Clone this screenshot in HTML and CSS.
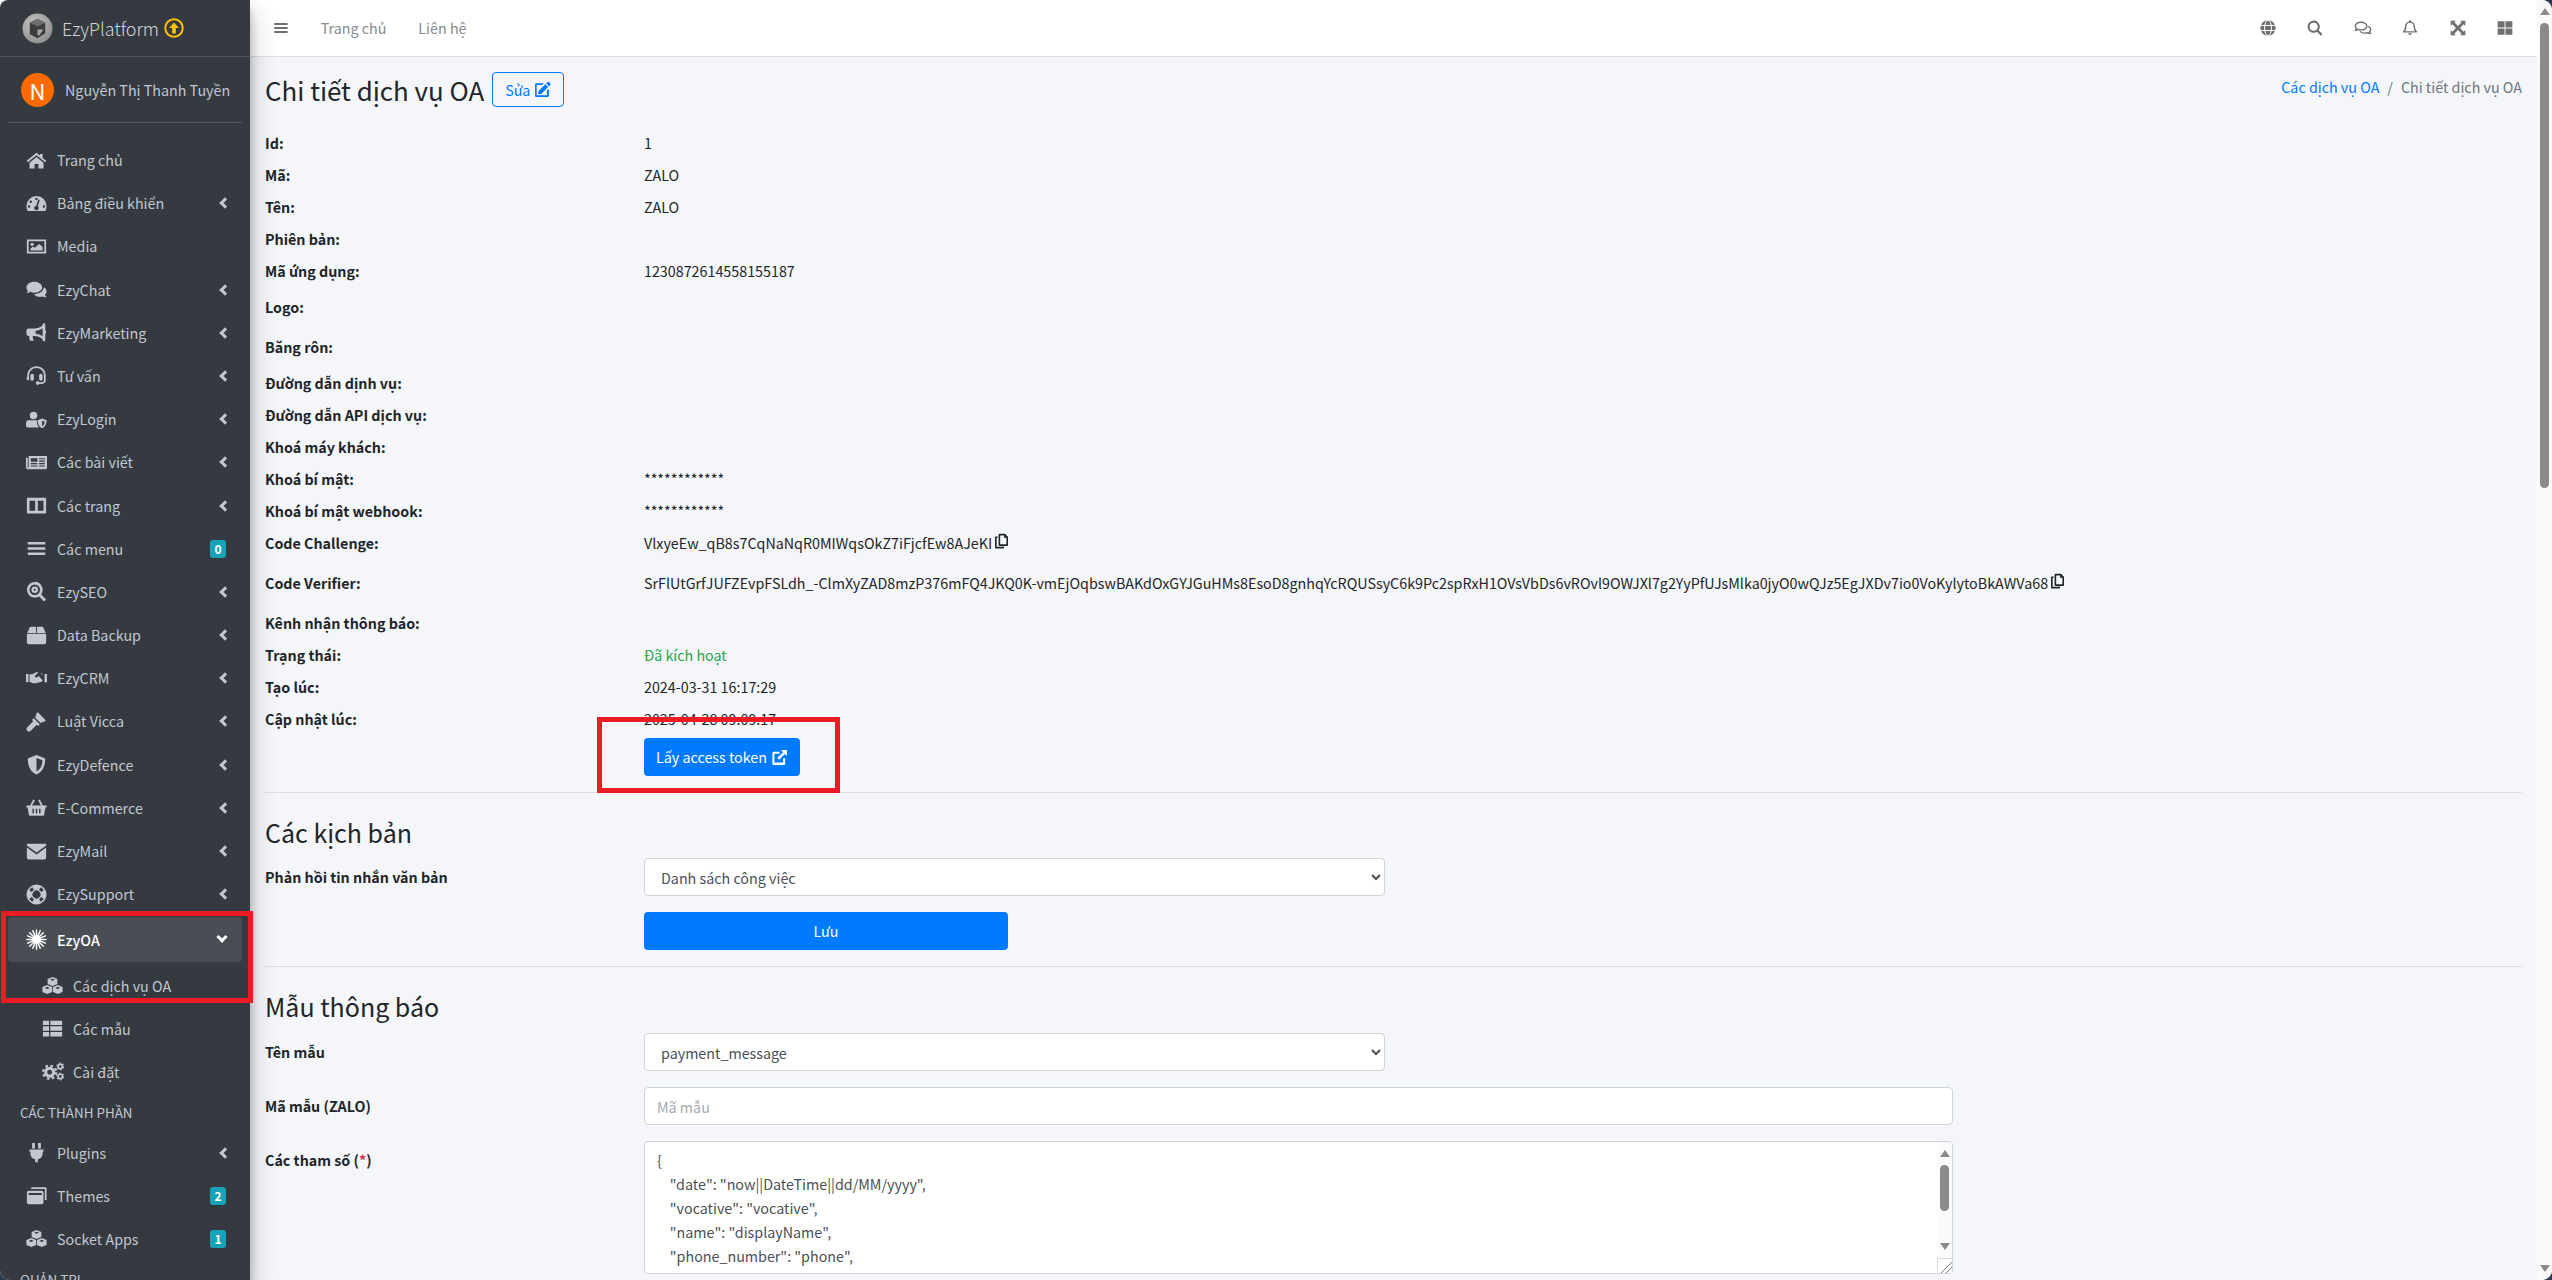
FILE: index.html
```html
<!DOCTYPE html>
<html lang="vi">
<head>
<meta charset="utf-8">
<title>Chi tiết dịch vụ OA</title>
<link rel="stylesheet" href="styles.css">
</head>
<body>
<svg class="sprite" width="0" height="0" aria-hidden="true">
  <symbol id="i-home" viewBox="0 0 24 24"><path d="M12 3.2 .8 12.4l1.3 1.6L12 5.9l9.900 8.100 1.300-1.600-4.200-3.400V4.500h-3v1.900zM4 14.600V21h5.800v-5h4.400v5H20v-6.400l-8-6.500z"/></symbol>
  <symbol id="i-gauge" viewBox="0 0 24 24"><path fill-rule="evenodd" d="M12 3.500A11.500 11.500 0 0 0 .5 15c0 2 .5 3.800 1.400 5.500h20.200c.9-1.700 1.400-3.500 1.400-5.500A11.500 11.500 0 0 0 12 3.500zM12 5.500a1.400 1.400 0 1 1 0 2.800 1.400 1.400 0 0 1 0-2.800zM5.500 8.500a1.400 1.400 0 1 1 0 2.800 1.400 1.400 0 0 1 0-2.800zM3.500 14a1.400 1.400 0 1 1 0 2.800 1.400 1.400 0 0 1 0-2.800zM20.500 14a1.400 1.400 0 1 1 0 2.800 1.400 1.400 0 0 1 0-2.800zM15.800 8 13.500 15a2.600 2.600 0 1 1-1.700-.5L14 7.500z"/></symbol>
  <symbol id="i-image" viewBox="0 0 24 24"><path fill-rule="evenodd" d="M1 4h22v16H1zM3 6v12h18V6z"/><circle cx="7" cy="9.500" r="1.800"/><path d="M5 16.500v-2l3-2.500 2 1.500 5-4.500 4 3.500v4z"/></symbol>
  <symbol id="i-comments" viewBox="0 0 24 24"><path d="M9.500 3C4.500 3 .5 6 .5 9.800c0 1.500.7 2.900 1.800 4-.5 1.300-1.600 2.200-1.800 2.400 1.700 0 3.400-.7 4.500-1.500 1.300.6 2.900 1 4.500 1 5 0 9-3 9-5.900C18.500 6 14.500 3 9.500 3z"/><path d="M23.500 20.500c-1-.9-1.500-1.800-1.800-2.500 1.100-1 1.800-2.300 1.800-3.800 0-1.900-1.100-3.600-2.900-4.700-.6 4.300-5.100 7.500-10.500 7.500h-1c1.300 2 3.900 3.400 7 3.400 1 0 2-.2 3-.5 1 .7 2.700 1.100 4.400.6z"/></symbol>
  <symbol id="i-bullhorn" viewBox="0 0 24 24"><path d="M20.500 1.500c-.8 0-1.500.7-1.500 1.500v.8C16 6.200 13 7.500 9.500 7.500H3A2.500 2.500 0 0 0 .5 10v3.500A2.500 2.500 0 0 0 3 16h.9a8 8 0 0 0 .7 5.500h4.300c-1-1.500-1.400-3.600-1-5.500h1.600c3.500 0 6.500 1.300 9.500 3.700v.8c0 .8.700 1.500 1.500 1.500s1.500-.7 1.500-1.500v-6.700a3 3 0 0 0 0-4.600V3c0-.8-.7-1.500-1.500-1.500zM19 7v9.500c-2.400-1.700-5-2.700-8-3V10c3-.3 5.600-1.300 8-3z"/></symbol>
  <symbol id="i-headset" viewBox="0 0 24 24"><path d="M12 1.500C6 1.500 1.500 6.200 1.500 12v1.500c-.6.400-1 1-1 1.700 0 1 .6 1.800 1.500 2.100h1.500V12c0-4.700 3.800-8.500 8.500-8.500s8.500 3.800 8.500 8.500v5.500c0 1.200-1 2.100-2.100 2.100h-3.400a2 2 0 1 0 0 2h3.400c2.300 0 4.100-1.800 4.100-4.100V12c0-5.800-4.500-10.500-10.500-10.500z"/><rect x="5" y="10" width="4" height="8" rx="2"/><rect x="15" y="10" width="4" height="8" rx="2"/></symbol>
  <symbol id="i-usershield" viewBox="0 0 28 24"><circle cx="10" cy="6.500" r="5"/><path d="M3 13h11.500c-.3 3 .4 6.500 3 9.500H2.500A2.500 2.500 0 0 1 0 20v-2c0-2.800 1-5 3-5z"/><path fill-rule="evenodd" d="M21.500 10.500l6 2.500c0 4-1.500 8.500-6 10.500-4.500-2-6-6.500-6-10.500zM21.500 13.500v7.500c2-1 3.200-3.400 3.400-6z"/></symbol>
  <symbol id="i-newspaper" viewBox="0 0 24 24"><path fill-rule="evenodd" d="M3 4.500h21V18a1.800 1.800 0 0 1-1.800 1.800H2a2 2 0 0 1-2-2V6.500h2v10.800c0 .4.200.6.500.6s.5-.2.500-.6zM5.500 7v4H13V7zM15 7v1.300h6.500V7zM15 9.800v1.300h6.500V9.800zM5.500 12.600v1.300H13v-1.300zM15 12.600v1.300h6.500v-1.300zM5.500 15.400v1.300H13v-1.300zM15 15.400v1.300h6.500v-1.300z"/></symbol>
  <symbol id="i-columns" viewBox="0 0 24 24"><path fill-rule="evenodd" d="M2 3h20a1 1 0 0 1 1 1v16a1 1 0 0 1-1 1H2a1 1 0 0 1-1-1V4a1 1 0 0 1 1-1zM4 6.500V18h6.500V6.500zM13.500 6.500V18H20V6.500z"/></symbol>
  <symbol id="i-bars" viewBox="0 0 24 24"><path d="M2 4.500h20v3H2zM2 10.500h20v3H2zM2 16.500h20v3H2z"/></symbol>
  <symbol id="i-seo" viewBox="0 0 24 24"><path fill-rule="evenodd" d="M10 1a9 9 0 0 1 7.300 14.300l5.700 5.700-2.300 2.300-5.700-5.700A9 9 0 1 1 10 1zM10 4a6 6 0 1 0 0 12 6 6 0 0 0 0-12zM10 6.200a3.800 3.800 0 1 1 0 7.600 3.800 3.800 0 0 1 0-7.600zM10 8.800a1.200 1.200 0 1 0 0 2.400 1.200 1.200 0 0 0 0-2.400z"/></symbol>
  <symbol id="i-box" viewBox="0 0 24 24"><path d="M5 2h6.500v7H1.500L4 3zM12.500 2H19l1 1 2.500 6h-10zM1 10h22v10a2 2 0 0 1-2 2H3a2 2 0 0 1-2-2z"/></symbol>
  <symbol id="i-handshake" viewBox="0 0 30 24"><path d="M0 5.500h3.500v12H0zM26.500 5.500H30v12h-3.500z"/><path d="M5 6h4l5-2.500c1-.4 2.500-.4 3.500 0L13 8c-1 1 0 3 2 2.500l3-2 6 6V7l-4.500-3H18c2 0 4 .5 6 2v9l-3 2.500-1.500-1-1 2-2-1-1.500 2-2-1.500-2 1L5 16.500z"/></symbol>
  <symbol id="i-gavel" viewBox="0 0 24 24"><path d="M13.500 1.500 22.500 10.500 20 13 19 12 17 14 10 7 12 5 11 4zM8.800 8.200l7 7-2 2-1.500-1.500L5.500 22.500a2 2 0 0 1-4-4l6.800-6.800-1.500-1.500z"/></symbol>
  <symbol id="i-shield" viewBox="0 0 24 24"><path fill-rule="evenodd" d="M12 1 22 5c0 8-2.500 15-10 18.500C4.500 20 2 13 2 5zM12 4.500V20c4.700-2.500 6.500-7 6.800-13z"/></symbol>
  <symbol id="i-basket" viewBox="0 0 26 24"><path fill-rule="evenodd" d="M11 3 7.500 9.500h11L15 3l2-1 4 7.500h4.500V12H24l-1.500 9a1.500 1.500 0 0 1-1.500 1.300H5A1.500 1.500 0 0 1 3.500 21L2 12H.5V9.500H5L9 2zM8 13.500V19h1.800v-5.500zM12.100 13.500V19h1.800v-5.500zM16.200 13.500V19H18v-5.500z"/></symbol>
  <symbol id="i-envelope" viewBox="0 0 24 24"><path d="M1 4.200C1 3.500 1.500 3 2.200 3h19.600c.7 0 1.200.5 1.200 1.200V5l-11 8L1 5zM1 7.500l11 8 11-8V19a2 2 0 0 1-2 2H3a2 2 0 0 1-2-2z"/></symbol>
  <symbol id="i-lifering" viewBox="0 0 24 24"><g transform="rotate(45 12 12)"><path fill-rule="evenodd" d="M12 .5a11.500 11.500 0 1 1 0 23 11.500 11.500 0 0 1 0-23zM12 7.500a4.500 4.500 0 1 0 0 9 4.500 4.500 0 0 0 0-9zM9.700 2.700l.6 3.500c1.100-.3 2.300-.3 3.400 0l.6-3.500a9.500 9.500 0 0 0-4.600 0zM2.700 9.700a9.500 9.500 0 0 0 0 4.600l3.500-.6c-.3-1.100-.3-2.300 0-3.400zM21.300 9.700l-3.500.6c.3 1.100.3 2.300 0 3.400l3.500.6a9.500 9.500 0 0 0 0-4.600zM10.300 17.800l-.6 3.500a9.500 9.500 0 0 0 4.600 0l-.6-3.500c-1.100.3-2.300.3-3.400 0z"/></g></symbol>
  <symbol id="i-burst" viewBox="0 0 24 24"><g stroke="currentColor" stroke-width="1.700" stroke-linecap="round"><path d="M12 1v22M1 12h22M4.200 4.200l15.600 15.600M19.800 4.200 4.200 19.800M7.800 1.900l8.400 20.200M16.200 1.900 7.800 22.100M1.900 7.800l20.200 8.400M22.100 7.800 1.900 16.200"/></g><circle cx="12" cy="12" r="2.200"/></symbol>
  <symbol id="i-cubes" viewBox="0 0 26 24"><path fill-rule="evenodd" d="M13 1.500 19 4v6l-6 2.500L7 10V4zM13 3.700 10 5l3 1.200L16 5zM6.500 11.500l6 2.500v6l-6 2.500-6-2.500v-6zM6.500 13.700l-3 1.300 3 1.200 3-1.200zM19.500 11.500l6 2.500v6l-6 2.500-6-2.500v-6zM19.500 13.700l-3 1.300 3 1.200 3-1.200z"/></symbol>
  <symbol id="i-table" viewBox="0 0 24 24"><path d="M1 3h7v5H1zM9.500 3H23v5H9.500zM1 9.500h7v5H1zM9.500 9.500H23v5H9.500zM1 16h7v5H1zM9.500 16H23v5H9.500z"/></symbol>
  <symbol id="i-cogs" viewBox="0 0 30 24"><g fill="none" stroke="currentColor"><circle cx="10" cy="13" r="5.200" stroke-width="4"/><circle cx="10" cy="13" r="8.500" stroke-width="3" stroke-dasharray="3.340 3.340"/><circle cx="23.800" cy="5.500" r="2.800" stroke-width="2"/><circle cx="23.800" cy="5.500" r="4.400" stroke-width="1.600" stroke-dasharray="2.300 2.300"/><circle cx="23.800" cy="18.500" r="2.800" stroke-width="2"/><circle cx="23.800" cy="18.500" r="4.400" stroke-width="1.600" stroke-dasharray="2.300 2.300"/></g></symbol>
  <symbol id="i-plug" viewBox="0 0 24 24"><path d="M7 1h3.200v6.500H7zM13.800 1H17v6.500h-3.200zM4 8.500h16V11h-1v2c0 3.500-2.400 6.200-5.500 6.800V23h-3v-3.200C7.400 19.200 5 16.500 5 13v-2H4z"/></symbol>
  <symbol id="i-clone" viewBox="0 0 24 24"><path fill-rule="evenodd" d="M3 6.500h15a2 2 0 0 1 2 2V20a2 2 0 0 1-2 2H3a2 2 0 0 1-2-2V8.500a2 2 0 0 1 2-2zM3 9v2.500h15V9z"/><path d="M6 2.500h16A1.500 1.500 0 0 1 23.500 4v13h-2V4.500H6z"/></symbol>
  <symbol id="i-globe" viewBox="0 0 24 24"><circle cx="12" cy="12" r="11.500"/><g fill="none" stroke="#fff" stroke-width="1.500"><ellipse cx="12" cy="12" rx="5.200" ry="11.500"/><path d="M.5 8.200h23M.5 15.800h23"/></g></symbol>
  <symbol id="i-search" viewBox="0 0 24 24"><path fill-rule="evenodd" d="M10 .8a9.200 9.200 0 0 1 7.400 14.600l5.800 5.800-2.400 2.400-5.800-5.800A9.200 9.200 0 1 1 10 .8zM10 4a6 6 0 1 0 0 12 6 6 0 0 0 0-12z"/></symbol>
  <symbol id="i-chat" viewBox="0 0 28 24"><g fill="none" stroke="currentColor" stroke-width="2.200" stroke-linejoin="round"><path d="M11 3C6 3 2 5.700 2 9.200c0 1.500.8 2.800 2 3.800-.4 1-1.200 2-2 2.500 1.800 0 3.500-.7 4.600-1.400 1.400.5 2.900.8 4.400.8 5 0 9-2.600 9-5.700S16 3 11 3z"/><path d="M22 9.500c2.400 1 4 2.800 4 4.800 0 1.500-.8 2.800-2 3.800.4 1 1.200 2 2 2.500-1.800 0-3.500-.7-4.600-1.400-1.400.5-2.900.8-4.400.8-3.200 0-6-1-7.500-2.800"/></g></symbol>
  <symbol id="i-bell" viewBox="0 0 24 24"><path fill="none" stroke="currentColor" stroke-width="2.200" stroke-linejoin="round" d="M12 3.200c-3.600 0-6.300 2.800-6.300 6.300 0 5-1.500 6.500-3.200 8.300h19c-1.700-1.800-3.200-3.300-3.200-8.300 0-3.500-2.700-6.300-6.300-6.300z"/><path d="M10.500.8h3v3h-3zM9.300 19.800h5.400a2.700 2.700 0 0 1-5.400 0z"/></symbol>
  <symbol id="i-expand" viewBox="0 0 24 24"><path d="M1 1h8L6.500 3.500 12 9l5.500-5.500L15 1h8v8l-2.500-2.500L15 12l5.500 5.500L23 15v8h-8l2.500-2.500L12 15l-5.500 5.500L9 23H1v-8l2.500 2.500L9 12 3.500 6.500 1 9z"/></symbol>
  <symbol id="i-thlarge" viewBox="0 0 24 24"><path d="M1 2h10.300v9.300H1zM12.700 2H23v9.300H12.700zM1 12.700h10.300V22H1zM12.700 12.700H23V22H12.700z"/></symbol>
  <symbol id="i-edit" viewBox="0 0 24 24"><path d="M3 3h11l-2.500 2.800H3.800v14.400h14.400v-6.700L21 11v10a1.500 1.500 0 0 1-1.500 1.500H3A1.500 1.500 0 0 1 1.500 21V4.500A1.500 1.500 0 0 1 3 3z"/><path d="M19 1.500a1.500 1.500 0 0 1 2 0l2 2a1.500 1.500 0 0 1 0 2l-1.700 1.800-4-4zM16 4.600l4 4-9.500 9.500-4.700.7.700-4.700z"/></symbol>
  <symbol id="i-external" viewBox="0 0 24 24"><path d="M4 4h8v2.800H4.800v12.400h12.400V13H20v8a1.500 1.500 0 0 1-1.500 1.500h-15A1.500 1.500 0 0 1 2 21V6a2 2 0 0 1 2-2z"/><path d="M14 1.500h8.500V10l-3-3-8 8-2.500-2.500 8-8z"/></symbol>
  <symbol id="i-copy" viewBox="0 0 20 24"><path fill-rule="evenodd" d="M7 1h8.500L20 5.500V18a1.500 1.500 0 0 1-1.500 1.500H7A1.500 1.500 0 0 1 5.500 18V2.500A1.500 1.500 0 0 1 7 1zM8 3.500V17h9.500V7H14V3.500z"/><path d="M1.500 5H4v2.500H2.500V21h9v-.5H14V22a1.500 1.500 0 0 1-1.500 1.500h-11A1.500 1.500 0 0 1 0 22V6.500A1.500 1.500 0 0 1 1.500 5z"/></symbol>
  <symbol id="i-upcircle" viewBox="0 0 24 24"><circle cx="12" cy="12" r="10.500" fill="none" stroke="currentColor" stroke-width="2.400"/><path d="M12 5.500 18 12h-3.800v6.500H9.800V12H6z"/></symbol>
</svg>

<div class="app">
  <aside class="sidebar">
    <div class="brand">
      <svg class="brand-logo" viewBox="0 0 32 32" aria-hidden="true">
        <defs><radialGradient id="logo-g" cx="40%" cy="35%" r="70%"><stop offset="0" stop-color="#c6c6c6"/><stop offset="1" stop-color="#8c8c8c"/></radialGradient></defs>
        <circle cx="16" cy="16" r="15.500" fill="url(#logo-g)"/>
        <path d="M8 10 16 6l8 4v11l-8 5-8-4z" fill="#3c3c3e"/>
        <path d="M16 6l8 4-8 4-8-4z" fill="#6e6e70"/>
        <path d="M16 17h6l-4 6h-2z" fill="#a8a8a8"/>
      </svg>
      <span class="brand-text">EzyPlatform</span>
      <svg class="icon brand-up"><use href="#i-upcircle"/></svg>
    </div>
    <div class="user-panel">
      <span class="avatar">N</span>
      <span class="user-name">Nguyễn Thị Thanh Tuyền</span>
    </div>
    <nav class="nav">
      <a class="nav-link"><svg class="icon nav-icon"><use href="#i-home"/></svg><span class="nav-text">Trang chủ</span></a>
      <a class="nav-link"><svg class="icon nav-icon"><use href="#i-gauge"/></svg><span class="nav-text">Bảng điều khiển</span><i class="chev"></i></a>
      <a class="nav-link"><svg class="icon nav-icon"><use href="#i-image"/></svg><span class="nav-text">Media</span></a>
      <a class="nav-link"><svg class="icon nav-icon"><use href="#i-comments"/></svg><span class="nav-text">EzyChat</span><i class="chev"></i></a>
      <a class="nav-link"><svg class="icon nav-icon"><use href="#i-bullhorn"/></svg><span class="nav-text">EzyMarketing</span><i class="chev"></i></a>
      <a class="nav-link"><svg class="icon nav-icon"><use href="#i-headset"/></svg><span class="nav-text">Tư vấn</span><i class="chev"></i></a>
      <a class="nav-link"><svg class="icon nav-icon"><use href="#i-usershield"/></svg><span class="nav-text">EzyLogin</span><i class="chev"></i></a>
      <a class="nav-link"><svg class="icon nav-icon"><use href="#i-newspaper"/></svg><span class="nav-text">Các bài viết</span><i class="chev"></i></a>
      <a class="nav-link"><svg class="icon nav-icon"><use href="#i-columns"/></svg><span class="nav-text">Các trang</span><i class="chev"></i></a>
      <a class="nav-link"><svg class="icon nav-icon"><use href="#i-bars"/></svg><span class="nav-text">Các menu</span><b class="badge">0</b></a>
      <a class="nav-link"><svg class="icon nav-icon"><use href="#i-seo"/></svg><span class="nav-text">EzySEO</span><i class="chev"></i></a>
      <a class="nav-link"><svg class="icon nav-icon"><use href="#i-box"/></svg><span class="nav-text">Data Backup</span><i class="chev"></i></a>
      <a class="nav-link"><svg class="icon nav-icon"><use href="#i-handshake"/></svg><span class="nav-text">EzyCRM</span><i class="chev"></i></a>
      <a class="nav-link"><svg class="icon nav-icon"><use href="#i-gavel"/></svg><span class="nav-text">Luật Vicca</span><i class="chev"></i></a>
      <a class="nav-link"><svg class="icon nav-icon"><use href="#i-shield"/></svg><span class="nav-text">EzyDefence</span><i class="chev"></i></a>
      <a class="nav-link"><svg class="icon nav-icon"><use href="#i-basket"/></svg><span class="nav-text">E-Commerce</span><i class="chev"></i></a>
      <a class="nav-link"><svg class="icon nav-icon"><use href="#i-envelope"/></svg><span class="nav-text">EzyMail</span><i class="chev"></i></a>
      <a class="nav-link"><svg class="icon nav-icon"><use href="#i-lifering"/></svg><span class="nav-text">EzySupport</span><i class="chev"></i></a>
      <a class="nav-link nav-link-active"><svg class="icon nav-icon"><use href="#i-burst"/></svg><span class="nav-text">EzyOA</span><i class="chev chev-down"></i></a>
      <a class="nav-link nav-sub"><svg class="icon nav-icon"><use href="#i-cubes"/></svg><span class="nav-text">Các dịch vụ OA</span></a>
      <a class="nav-link nav-sub"><svg class="icon nav-icon"><use href="#i-table"/></svg><span class="nav-text">Các mẫu</span></a>
      <a class="nav-link nav-sub"><svg class="icon nav-icon nav-icon-wide"><use href="#i-cogs"/></svg><span class="nav-text">Cài đặt</span></a>
      <div class="nav-header">CÁC THÀNH PHẦN</div>
      <a class="nav-link"><svg class="icon nav-icon"><use href="#i-plug"/></svg><span class="nav-text">Plugins</span><i class="chev"></i></a>
      <a class="nav-link"><svg class="icon nav-icon"><use href="#i-clone"/></svg><span class="nav-text">Themes</span><b class="badge">2</b></a>
      <a class="nav-link"><svg class="icon nav-icon"><use href="#i-cubes"/></svg><span class="nav-text">Socket Apps</span><b class="badge">1</b></a>
      <div class="nav-header">QUẢN TRỊ</div>
    </nav>
  </aside>

  <div class="main">
    <header class="navbar">
      <svg class="icon top-icon"><use href="#i-bars"/></svg>
      <a class="top-link">Trang chủ</a>
      <a class="top-link">Liên hệ</a>
      <div class="top-right">
        <svg class="icon top-icon"><use href="#i-globe"/></svg>
        <svg class="icon top-icon"><use href="#i-search"/></svg>
        <svg class="icon top-icon top-icon-chat"><use href="#i-chat"/></svg>
        <svg class="icon top-icon"><use href="#i-bell"/></svg>
        <svg class="icon top-icon"><use href="#i-expand"/></svg>
        <svg class="icon top-icon"><use href="#i-thlarge"/></svg>
      </div>
    </header>

    <main class="content">
      <div class="page-head">
        <h1 class="page-title">Chi tiết dịch vụ OA</h1>
        <a class="btn-outline">Sửa <svg class="icon btn-icon"><use href="#i-edit"/></svg></a>
        <ol class="breadcrumb">
          <li><a class="link">Các dịch vụ OA</a></li>
          <li class="crumb-sep">/</li>
          <li class="crumb-active">Chi tiết dịch vụ OA</li>
        </ol>
      </div>

      <dl class="details">
        <div class="row"><dt>Id:</dt><dd>1</dd></div>
        <div class="row"><dt>Mã:</dt><dd>ZALO</dd></div>
        <div class="row"><dt>Tên:</dt><dd>ZALO</dd></div>
        <div class="row"><dt>Phiên bản:</dt><dd></dd></div>
        <div class="row"><dt>Mã ứng dụng:</dt><dd>1230872614558155187</dd></div>
        <div class="row row-media"><dt>Logo:</dt><dd></dd></div>
        <div class="row row-media"><dt>Băng rôn:</dt><dd></dd></div>
        <div class="row"><dt>Đường dẫn dịnh vụ:</dt><dd></dd></div>
        <div class="row"><dt>Đường dẫn API dịch vụ:</dt><dd></dd></div>
        <div class="row"><dt>Khoá máy khách:</dt><dd></dd></div>
        <div class="row"><dt>Khoá bí mật:</dt><dd>************</dd></div>
        <div class="row"><dt>Khoá bí mật webhook:</dt><dd>************</dd></div>
        <div class="row row-code"><dt>Code Challenge:</dt><dd>VlxyeEw_qB8s7CqNaNqR0MIWqsOkZ7iFjcfEw8AJeKI<svg class="icon copy-icon"><use href="#i-copy"/></svg></dd></div>
        <div class="row row-code"><dt>Code Verifier:</dt><dd>SrFlUtGrfJUFZEvpFSLdh_-ClmXyZAD8mzP376mFQ4JKQ0K-vmEjOqbswBAKdOxGYJGuHMs8EsoD8gnhqYcRQUSsyC6k9Pc2spRxH1OVsVbDs6vROvl9OWJXl7g2YyPfUJsMlka0jyO0wQJz5EgJXDv7io0VoKylytoBkAWVa68<svg class="icon copy-icon"><use href="#i-copy"/></svg></dd></div>
        <div class="row"><dt>Kênh nhận thông báo:</dt><dd></dd></div>
        <div class="row"><dt>Trạng thái:</dt><dd class="status">Đã kích hoạt</dd></div>
        <div class="row"><dt>Tạo lúc:</dt><dd>2024-03-31 16:17:29</dd></div>
        <div class="row"><dt>Cập nhật lúc:</dt><dd>2025-04-28 09:09:17</dd></div>
      </dl>

      <div class="action-row"><a class="btn-primary btn-token">Lấy access token <svg class="icon btn-icon"><use href="#i-external"/></svg></a></div>
      <hr class="sep">

      <h3 class="section-title">Các kịch bản</h3>
      <div class="form-row">
        <label class="form-label">Phản hồi tin nhắn văn bản</label>
        <select class="control control-select"><option>Danh sách công việc</option></select>
      </div>
      <div class="form-row form-row-btn">
        <span class="form-label"></span>
        <a class="btn-primary btn-save">Lưu</a>
      </div>
      <hr class="sep">

      <h3 class="section-title section-title-2">Mẫu thông báo</h3>
      <div class="form-row">
        <label class="form-label">Tên mẫu</label>
        <select class="control control-select"><option>payment_message</option></select>
      </div>
      <div class="form-row">
        <label class="form-label">Mã mẫu (ZALO)</label>
        <input class="control control-wide" placeholder="Mã mẫu">
      </div>
      <div class="form-row">
        <label class="form-label">Các tham số (<span class="req">*</span>)</label>
        <div class="area-wrap">
          <textarea class="control control-wide control-area" rows="5">{
    "date": "now||DateTime||dd/MM/yyyy",
    "vocative": "vocative",
    "name": "displayName",
    "phone_number": "phone",
    "code": "orderCode",
    "amount": "totalAmount"
}</textarea>
          <div class="area-scroll">
            <span class="sb-btn"><i class="arrow-up"></i></span>
            <span class="sb-track"><i class="sb-thumb sb-thumb-area"></i></span>
            <span class="sb-btn"><i class="arrow-down"></i></span>
            <span class="area-grip"></span>
          </div>
        </div>
      </div>
    </main>
  </div>

  <div class="page-scroll">
    <span class="sb-btn"><i class="arrow-up"></i></span>
    <span class="sb-track"><i class="sb-thumb sb-thumb-page"></i></span>
    <span class="sb-btn"><i class="arrow-down"></i></span>
  </div>

  <div class="mark mark-nav"></div>
  <div class="mark mark-token"></div>
</div>
</body>
</html>
```

FILE: styles.css
```css
* { box-sizing: border-box; }
html, body { margin: 0; height: 100%; background: #2a3a55; overflow: hidden; }
body {
  font-family: "Noto Sans CJK JP", "Noto Sans", sans-serif;
  font-size: 14.300px;
  line-height: 24px;
  color: #212529;
}
.sprite { position: absolute; }
.icon { fill: currentColor; display: block; flex: none; }

.app {
  position: relative;
  display: flex;
  width: 2552px;
  height: 1280px;
  overflow: hidden;
  background: #fff;
  border-radius: 0 10px 10px 10px;
}

/* Sidebar */
.sidebar {
  position: relative;
  z-index: 2;
  width: 250px;
  flex: none;
  height: 1280px;
  overflow: hidden;
  background: #343a40;
  color: #c2c7d0;
  border-radius: 8px 0 0 0;
  box-shadow: 0 14px 28px rgba(0,0,0,.25), 0 10px 10px rgba(0,0,0,.22);
}
.brand {
  display: flex;
  align-items: center;
  height: 57px;
  padding-left: 22px;
  border-bottom: 1px solid #4b545c;
}
.brand-logo { width: 31px; height: 31px; flex: none; }
.brand-text { margin-left: 9px; font-size: 17.900px; font-weight: 300; color: rgba(255,255,255,.8); }
.brand-up { width: 20px; height: 20px; margin-left: 5px; color: #ffc107; }
.user-panel {
  display: flex;
  align-items: center;
  height: 66px;
  margin: 0 8px;
  padding-left: 13px;
  border-bottom: 1px solid #4f5962;
}
.avatar {
  width: 33px;
  height: 34px;
  border-radius: 50%;
  background: #ff6a00;
  color: #fff;
  font-size: 22px;
  line-height: 34px;
  text-align: center;
  flex: none;
}
.user-name { margin-left: 11px; white-space: nowrap; }

.nav { display: flex; flex-direction: column; padding-top: 17px; }
.nav-link {
  display: flex;
  align-items: center;
  height: 40px;
  margin: 0 8px 3.200px;
  padding: 0 16px;
  border-radius: 4px;
  flex: none;
}
.nav-icon { width: 21px; height: 21px; margin: 0 2px; }
.nav-icon-wide { width: 23px; margin: 0 0 0 2px; }
.nav-text { margin-left: 8px; white-space: nowrap; }
.chev {
  margin-left: auto;
  margin-right: -2.500px;
  width: 8px;
  height: 8px;
  border-left: 3px solid currentColor;
  border-bottom: 3px solid currentColor;
  transform: rotate(45deg);
}
.chev-down { transform: rotate(-45deg); margin-top: -6px; margin-right: 0; }
.badge {
  margin-left: auto;
  width: 16px;
  height: 18px;
  border-radius: 3px;
  background: #17a2b8;
  color: #fff;
  font-size: 12px;
  line-height: 18px;
  text-align: center;
}
.nav-link-active {
  height: 45px;
  background: rgba(255,255,255,.1);
  color: #fff;
  font-weight: 500;
}
.nav-sub { padding-left: 32px; }
.nav-header {
  height: 37.400px;
  padding: 7px 20px;
  font-size: 13.400px;
  line-height: 21px;
  white-space: nowrap;
  flex: none;
}

/* Main */
.main {
  flex: 1;
  min-width: 0;
  height: 1280px;
  overflow: hidden;
  background: #f4f6f9;
}
.navbar {
  display: flex;
  align-items: center;
  height: 57px;
  padding-left: 23px;
  background: #fff;
  border-bottom: 1px solid #dee2e6;
  color: #6f6f6f;
}
.top-icon { width: 16px; height: 16px; }
.top-icon-chat { width: 18px; margin: 0 -1px; }
.top-link { margin-right: 32px; color: #8a8a8a; }
.top-icon + .top-link { margin-left: 31.700px; }
.top-right {
  margin-left: auto;
  display: flex;
  align-items: center;
  gap: 31.500px;
  padding-right: 24px;
}

.content { padding: 0 15px; }
.page-head { display: flex; align-items: center; height: 70px; padding-bottom: 5px; }
.page-title { margin: 0; font-size: 25.900px; font-weight: 400; line-height: 35px; color: #212529; white-space: nowrap; }
.btn-outline {
  display: inline-flex;
  align-items: center;
  gap: 4px;
  height: 35px;
  margin-left: 8px;
  padding: 0 12px;
  border: 1px solid #007bff;
  border-radius: 4px;
  color: #007bff;
  white-space: nowrap;
}
.btn-icon { width: 17px; height: 17px; }
.breadcrumb {
  list-style: none;
  display: flex;
  gap: 8px;
  margin: -5px 0 0 auto;
  padding: 0;
}
.link { color: #007bff; }
.crumb-sep, .crumb-active { color: #6c757d; }

.details { margin: 0; }
.row { display: flex; height: 32px; padding-top: 4px; }
.row dt { width: 379px; flex: none; font-weight: 700; }
.row dd { margin: 0; display: flex; align-items: flex-start; }
.row-media { height: 40px; padding-top: 8px; }
.row-code { height: 40px; }
.copy-icon { width: 13px; height: 16px; margin: 2px 0 0 3px; }
.status { color: #28a745; }

.action-row { padding-left: 379px; margin-top: 3px; }
.btn-primary {
  display: flex;
  align-items: center;
  justify-content: center;
  height: 38px;
  border-radius: 4px;
  background: #007bff;
  color: #fff;
}
.btn-token { width: 156px; gap: 4px; }
.sep { margin: 16px 0 0; border: 0; border-top: 1px solid #dcdfe3; }
.section-title { margin: 0; height: 65px; padding-top: 25px; font-size: 25px; font-weight: 400; line-height: 29px; }
.section-title-2 { height: 66px; }
.form-row { display: flex; margin-bottom: 16px; }
.form-row-btn { margin-bottom: 0; }
.form-label { width: 379px; flex: none; font-weight: 700; line-height: 38px; }
.control {
  height: 38px;
  padding: 6px 12px;
  border: 1px solid #ced4da;
  border-radius: 4px;
  background: #fff;
  color: #495057;
  font: inherit;
}
.control::placeholder { color: #a3a9af; }
.control-select { width: 741px; }
.btn-save { width: 364px; }
.control-wide { width: 1309px; }
.area-wrap { position: relative; }
.control-area {
  display: block;
  height: 133px;
  line-height: 24px;
  resize: none;
  overflow: hidden;
  outline: 0;
}
.req { color: #dc3545; }

/* Drawn scrollbars */
.page-scroll, .area-scroll {
  display: flex;
  flex-direction: column;
  background: #fafafa;
}
.page-scroll { flex: none; width: 15px; height: 1280px; }
.area-scroll { position: absolute; top: 1px; right: 1px; bottom: 1px; width: 15px; border-radius: 0 3px 3px 0; }
.sb-btn { flex: none; height: 23px; display: flex; align-items: center; justify-content: center; }
.sb-track { flex: 1; min-height: 0; padding: 0 3px; }
.sb-thumb { display: block; height: 100%; background: #8a8a8a; border-radius: 5px; }
.sb-thumb-page { height: 465px; }
.sb-thumb-area { height: 46px; }
.arrow-up, .arrow-down { width: 0; height: 0; border-left: 5px solid transparent; border-right: 5px solid transparent; }
.arrow-up { border-bottom: 7px solid #8a8a8a; }
.arrow-down { border-top: 7px solid #8a8a8a; }
.area-grip {
  flex: none;
  height: 15px;
  border: 1px solid #dcdcdc;
  border-width: 1px 0 0 1px;
  background: linear-gradient(135deg, #fff 58%, #777 58%, #777 64%, #fff 64%, #fff 76%, #777 76%, #777 82%, #fff 82%);
}

/* Red annotation frames drawn over the screenshot */
.mark { position: absolute; z-index: 5; border: 5px solid #ed1c24; pointer-events: none; }
.mark-nav { left: 1px; top: 911px; width: 252px; height: 92px; }
.mark-token { left: 597px; top: 717px; width: 243px; height: 76px; }
```
